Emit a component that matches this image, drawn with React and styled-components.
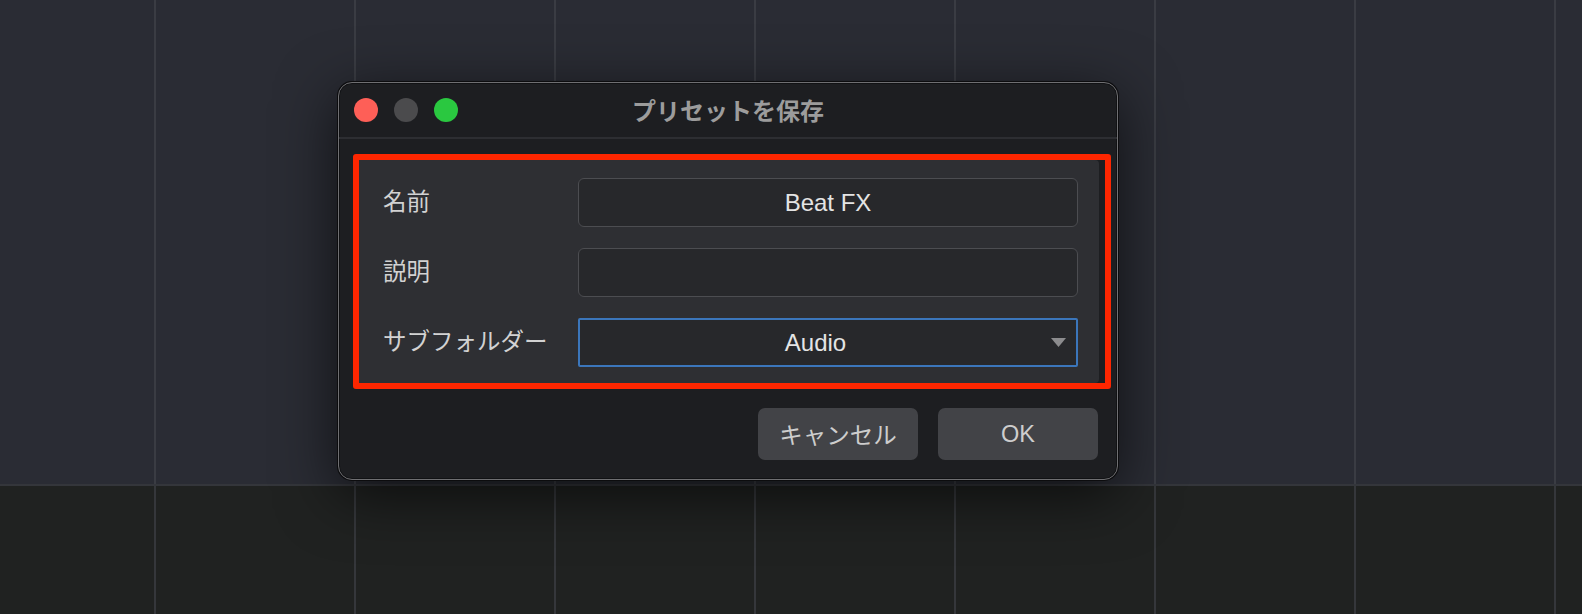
import React from "react";
import styled, { createGlobalStyle } from "styled-components";

const Global = createGlobalStyle`
  html, body { margin: 0; padding: 0; background: #2a2c34; }
  body { font-family: "Liberation Sans", "Noto Sans CJK JP", sans-serif; }
  * { box-sizing: border-box; }
`;

const gridLines = (color) => `repeating-linear-gradient(to right, transparent 0 154px, ${color} 154px 156px, transparent 156px 200px)`;

const Page = styled.div`
  position: relative;
  width: 1582px;
  height: 614px;
  overflow: hidden;
  display: flex;
  flex-direction: column;
`;

const TrackArea = styled.div`
  height: 484px;
  background-color: #2a2c34;
  background-image: ${gridLines("#3a3c43")};
`;

const Divider = styled.div`
  height: 2px;
  background: #34363b;
`;

const LowerArea = styled.div`
  flex: 1;
  background-color: #202221;
  background-image: ${gridLines("#35373b")};
`;

const Dialog = styled.div`
  position: absolute;
  left: 338px;
  top: 82px;
  width: 780px;
  height: 398px;
  display: flex;
  flex-direction: column;
  background: #1d1e21;
  border: 1px solid #6f6f72;
  border-radius: 14px;
  box-shadow: inset 0 0 0 1px #111214, 0 0 0 1px #0c0c0e, 0 14px 60px rgba(0, 0, 0, 0.65);
  overflow: hidden;
`;

const TitleBar = styled.div`
  height: 56px;
  display: grid;
  grid-template-columns: 1fr auto 1fr;
  align-items: center;
  padding: 0 15px;
  border-bottom: 2px solid #2d2e32;
`;

const Lights = styled.div`
  display: flex;
  gap: 16px;
  align-items: center;
`;

const Light = styled.span`
  width: 24px;
  height: 24px;
  border-radius: 50%;
  background: ${(p) => p.$color};
`;

const Title = styled.div`
  font-family: "Noto Sans CJK JP", sans-serif;
  font-weight: 700;
  font-size: 24px;
  color: #9c9c9c;
  margin-top: -2px;
`;

const Body = styled.div`
  flex: 1;
  display: flex;
  flex-direction: column;
  padding: 15px 6px 16px 14px;
`;

const Highlight = styled.div`
  border: 6px solid #fe2600;
  border-radius: 3px;
  padding-right: 6px;
  background: #1d1e21;
`;

const Panel = styled.div`
  background: #2e2f33;
  border-radius: 0 4px 4px 0;
  padding: 18px 19px 16px 24px;
  display: grid;
  grid-template-columns: 195px 500px;
  row-gap: 21px;
  align-items: center;
`;

const Label = styled.div`
  font-family: "Noto Sans CJK JP", sans-serif;
  font-size: 23.5px;
  color: #d2d2d2;
  line-height: 1;
  margin-top: -4px;
`;

const Field = styled.div`
  height: 49px;
  display: flex;
  align-items: center;
  justify-content: center;
  background: #27282b;
  border: 1px solid #4c4d51;
  border-radius: 6px;
  font-size: 24px;
  color: #e4e4e4;
`;

const Select = styled.div`
  height: 49px;
  display: flex;
  align-items: center;
  padding: 0 10px 0 0;
  background: #27282b;
  border: 2px solid #3b76bb;
  border-radius: 2px;
  font-size: 24px;
  color: #e4e4e4;
`;

const SelectValue = styled.span`
  flex: 1;
  text-align: center;
`;

const Buttons = styled.div`
  display: flex;
  justify-content: flex-end;
  gap: 20px;
  margin-top: 19px;
  padding-right: 13px;
`;

const Button = styled.button`
  width: 160px;
  height: 52px;
  border: none;
  border-radius: 7px;
  background: #424347;
  color: #cdcdcd;
  font-family: "Liberation Sans", "Noto Sans CJK JP", sans-serif;
  font-size: 23.5px;
  padding: 0;
`;

export default function App() {
  return (
    <>
      <Global />
      <Page>
        <TrackArea />
        <Divider />
        <LowerArea />
        <Dialog>
          <TitleBar>
            <Lights>
              <Light $color="#fe5f57" />
              <Light $color="#4b4b4d" />
              <Light $color="#2ac840" />
            </Lights>
            <Title>プリセットを保存</Title>
            <span />
          </TitleBar>
          <Body>
            <Highlight>
              <Panel>
                <Label>名前</Label>
                <Field>Beat FX</Field>
                <Label>説明</Label>
                <Field />
                <Label>サブフォルダー</Label>
                <Select>
                  <SelectValue>Audio</SelectValue>
                  <svg width="15" height="9" viewBox="0 0 15 9">
                    <path d="M0 0 H15 L7.5 9 Z" fill="#8c8c8e" />
                  </svg>
                </Select>
              </Panel>
            </Highlight>
            <Buttons>
              <Button>キャンセル</Button>
              <Button>OK</Button>
            </Buttons>
          </Body>
        </Dialog>
      </Page>
    </>
  );
}
